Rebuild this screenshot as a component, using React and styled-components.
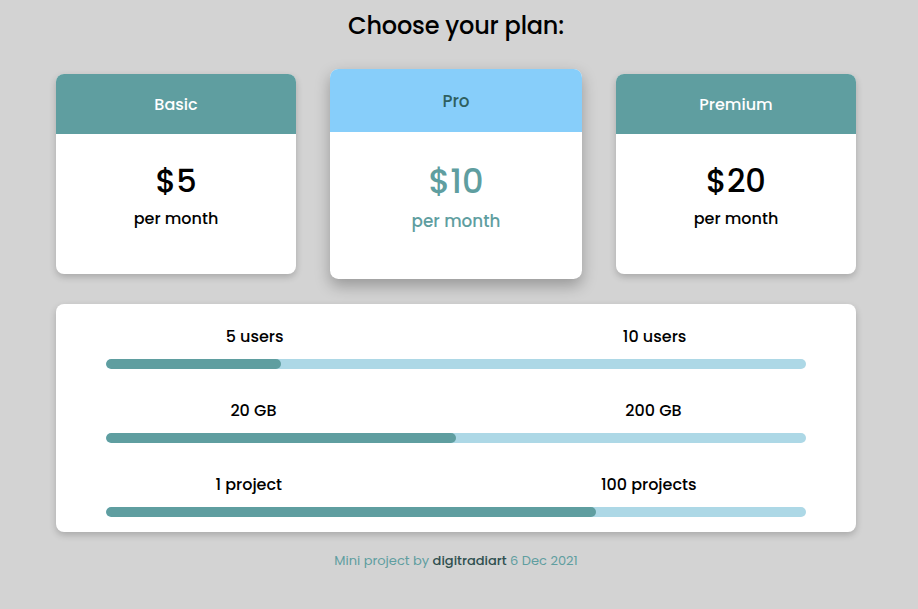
import React from "react";
import styled, { createGlobalStyle } from "styled-components";

const Global = createGlobalStyle`
  html, body { margin: 0; padding: 0; background: #d3d3d3; }
  body { font-family: "Poppins", "Open Sans", "Noto Sans", sans-serif; color: #000; }
`;

const Page = styled.div`
  width: 800px;
  margin-left: 56px;
  padding-top: 8px;
  display: flex;
  flex-direction: column;
`;

const Title = styled.h1`
  margin: 0;
  font-size: 24px;
  line-height: 36px;
  font-weight: 500;
  text-align: center;
  letter-spacing: -0.2px;
`;

const Cards = styled.div`
  margin-top: 30px;
  display: flex;
  gap: 40px;
  align-items: center;
`;

const Card = styled.div`
  width: 240px;
  height: 200px;
  background: #fff;
  border-radius: 8px;
  overflow: hidden;
  display: flex;
  flex-direction: column;
  box-shadow: ${(p) => (p.$featured ? "0 6px 14px rgba(0,0,0,0.28)" : "0 3px 7px rgba(0,0,0,0.2)")};
  transform: ${(p) => (p.$featured ? "scale(1.05)" : "none")};
`;

const CardHead = styled.div`
  height: 60px;
  display: flex;
  align-items: center;
  justify-content: center;
  background: ${(p) => (p.$featured ? "#87cefa" : "#5f9ea0")};
  color: ${(p) => (p.$featured ? "#2f5f5f" : "#fff")};
  font-size: 16px;
  font-weight: 500;
`;

const CardBody = styled.div`
  padding-top: 27px;
  display: flex;
  flex-direction: column;
  align-items: center;
  color: ${(p) => (p.$featured ? "#5f9ea0" : "#000")};
`;

const Price = styled.div`
  font-size: 32px;
  line-height: 40px;
  font-weight: 500;
`;

const Per = styled.div`
  margin-top: 6px;
  font-size: 16px;
  line-height: 24px;
  font-weight: 500;
`;

const Panel = styled.div`
  margin-top: 30px;
  background: #fff;
  border-radius: 8px;
  box-shadow: 0 3px 7px rgba(0,0,0,0.2);
  padding: 21px 0 15px;
  display: flex;
  flex-direction: column;
  gap: 30px;
`;

const Feature = styled.div`
  display: flex;
  flex-direction: column;
  gap: 10px;
`;

const Labels = styled.div`
  display: flex;
  justify-content: space-around;
  font-size: 16px;
  line-height: 24px;
  font-weight: 500;
`;

const Track = styled.div`
  margin: 0 50px;
  height: 10px;
  border-radius: 5px;
  background: #add8e6;
  overflow: hidden;
`;

const Fill = styled.div`
  height: 100%;
  border-radius: 5px;
  background: #5f9ea0;
`;

const Footer = styled.div`
  margin-top: 19px;
  text-align: center;
  font-size: 13px;
  line-height: 20px;
  color: #5f9ea0;
`;

const Author = styled.span`
  color: #2f4f4f;
  font-weight: 500;
`;

const plans = [
  { name: "Basic", price: "$5" },
  { name: "Pro", price: "$10", featured: true },
  { name: "Premium", price: "$20" },
];

const features = [
  { a: "5 users", b: "10 users", pct: 25 },
  { a: "20 GB", b: "200 GB", pct: 50 },
  { a: "1 project", b: "100 projects", pct: 70 },
];

export default function App() {
  return (
    <>
      <Global />
      <Page>
        <Title>Choose your plan:</Title>
        <Cards>
          {plans.map((p) => (
            <Card key={p.name} $featured={p.featured}>
              <CardHead $featured={p.featured}>{p.name}</CardHead>
              <CardBody $featured={p.featured}>
                <Price>{p.price}</Price>
                <Per>per month</Per>
              </CardBody>
            </Card>
          ))}
        </Cards>
        <Panel>
          {features.map((f) => (
            <Feature key={f.a}>
              <Labels>
                <span>{f.a}</span>
                <span>{f.b}</span>
              </Labels>
              <Track>
                <Fill style={{ width: `${f.pct}%` }} />
              </Track>
            </Feature>
          ))}
        </Panel>
        <Footer>
          Mini project by <Author>digitradiart</Author> 6 Dec 2021
        </Footer>
      </Page>
    </>
  );
}
